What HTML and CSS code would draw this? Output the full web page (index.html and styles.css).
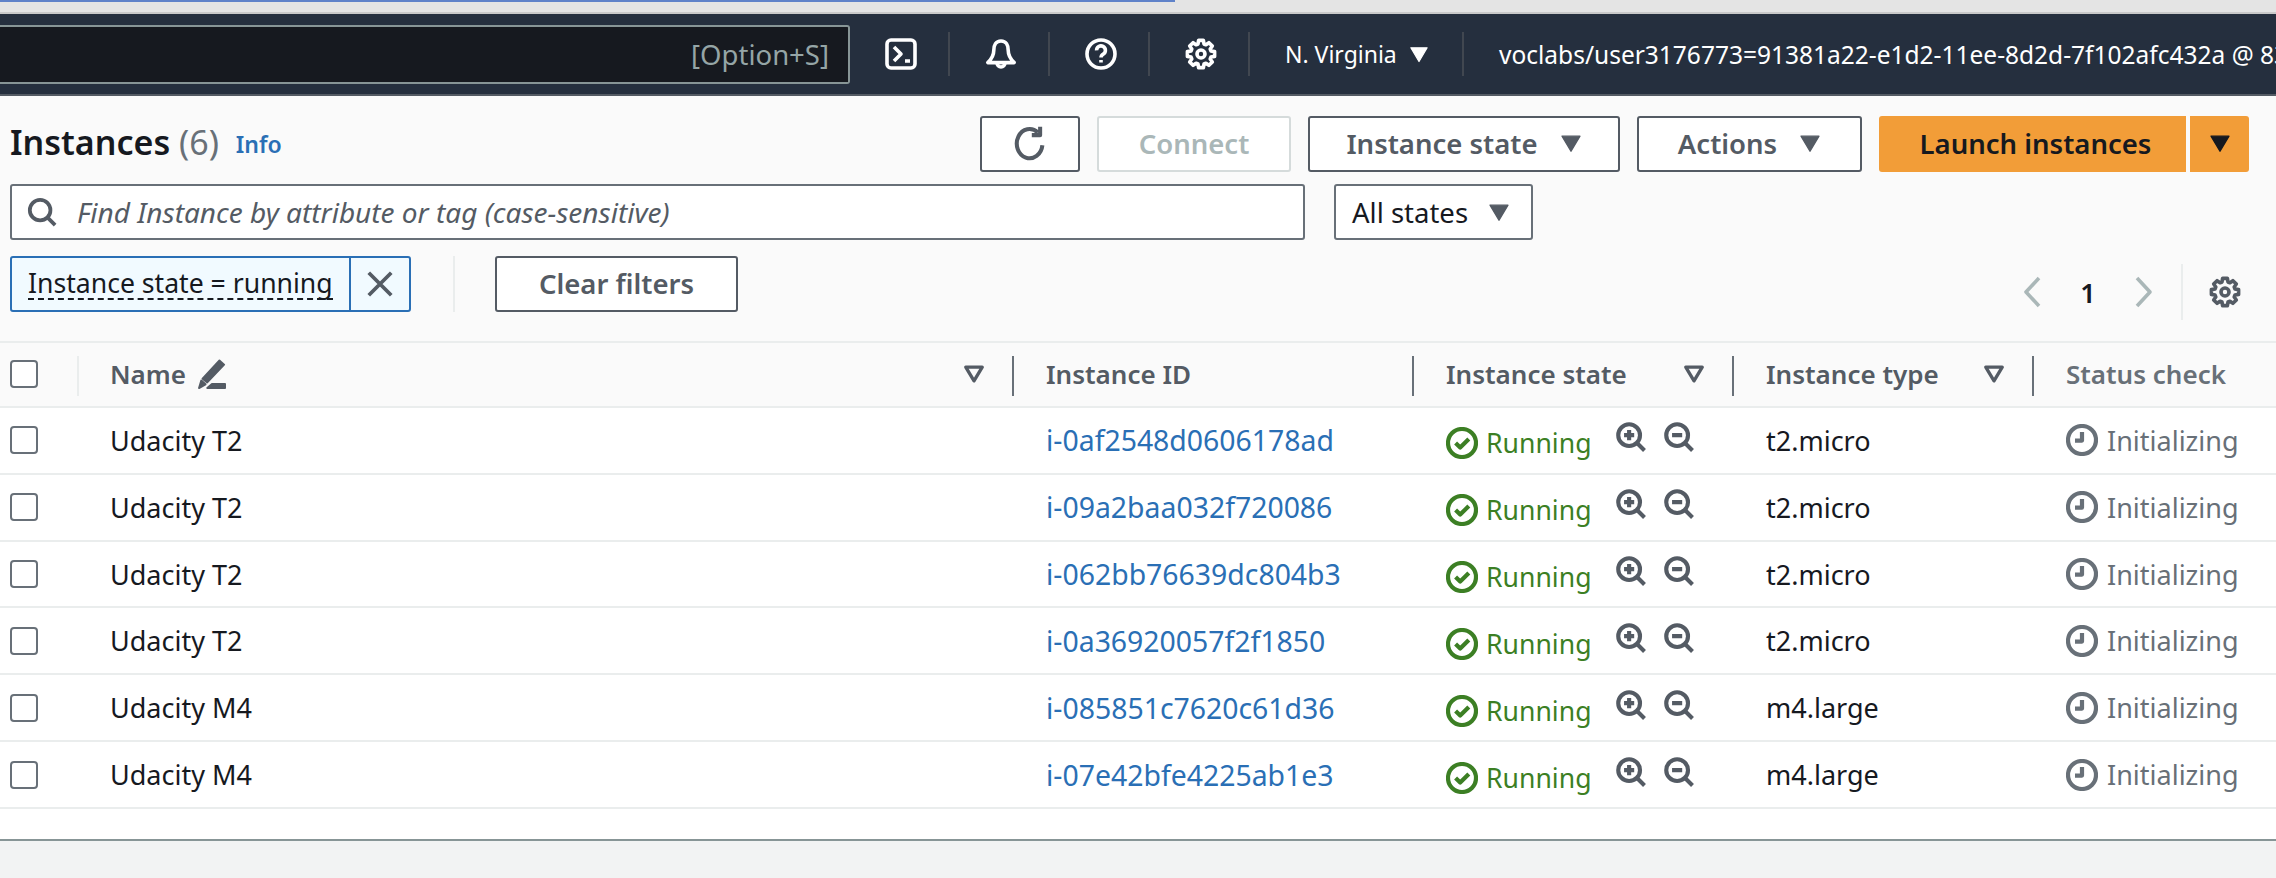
FILE: index.html
```html
<!DOCTYPE html>
<html lang="en">
<head>
<meta charset="UTF-8">
<title>Instances | EC2</title>
<link rel="stylesheet" href="styles.css">
</head>
<body>
<svg class="defs" width="0" height="0">
  <symbol id="i-console" viewBox="0 0 16 16"><rect x="1" y="1" width="14" height="14" rx="2"/><path d="M4.5 4.5 8 8l-3.5 3.5M10 11.5h2.5"/></symbol>
  <symbol id="i-bell" viewBox="0 0 16 16"><path d="M8 1.5c-2.6 0-3.6 2.2-3.6 4.6 0 2.800-1 4.300-3 6.200h13.200c-2-1.900-3-3.400-3-6.200 0-2.400-1-4.600-3.600-4.600zM6 12.500a2 2 0 1 0 4 0"/></symbol>
  <symbol id="i-help" viewBox="0 0 16 16"><circle cx="8" cy="8" r="7"/><path d="M5.800 6.200a2.200 2.200 0 1 1 3.400 1.800c-.8.500-1.200 1-1.200 1.800M8 11v1.300"/></symbol>
  <symbol id="i-gear" viewBox="0 0 16 16"><path d="M6.500 3 6.800 1.200H9.200L9.500 3 10.470 3.400 11.960 2.340 13.660 4.040 12.600 5.530 13 6.500 14.800 6.800V9.200L13 9.500 12.600 10.470 13.660 11.960 11.960 13.660 10.470 12.600 9.500 13 9.200 14.800H6.800L6.500 13 5.530 12.600 4.040 13.660 2.340 11.960 3.400 10.470 3 9.500 1.200 9.200V6.800L3 6.500 3.400 5.530 2.340 4.040 4.040 2.340 5.530 3.400Z"/><circle cx="8" cy="8" r="2"/></symbol>
  <symbol id="i-refresh" viewBox="0 0 16 16"><path d="M13.500 9a5.700 6.500 0 1 1-2-5.700M12.500 .8v3.700H8.800"/></symbol>
  <symbol id="i-search" viewBox="0 0 16 16"><circle cx="7" cy="7" r="5.500"/><path d="m11 11 4 4"/></symbol>
  <symbol id="i-caret" viewBox="0 0 16 16"><path class="solid" d="M1.500 3h13L8 14z"/></symbol>
  <symbol id="i-sort" viewBox="0 0 16 16"><path d="M2 3h12L8 13z"/></symbol>
  <symbol id="i-close" viewBox="0 0 16 16"><path d="m2 2 12 12M14 2 2 14"/></symbol>
  <symbol id="i-prev" viewBox="0 0 16 16"><path d="M11 1 4.500 8l6.500 7"/></symbol>
  <symbol id="i-next" viewBox="0 0 16 16"><path d="m5 1 6.500 7L5 15"/></symbol>
  <symbol id="i-pencil" viewBox="0 0 16 16"><path class="solid" d="M12.500 .8 15 3 6 12.500 3.500 10.500zM2.800 11.500l2.300 2-3.500 2zM8.500 13.300H15.500V15.500H6z"/></symbol>
  <symbol id="i-ok" viewBox="0 0 16 16"><circle cx="8" cy="8" r="7"/><path d="m4.800 8 2.300 2.300 4.300-4.300"/></symbol>
  <symbol id="i-clock" viewBox="0 0 16 16"><circle cx="8" cy="8" r="7"/><path d="M8 4v4.300H4.500"/></symbol>
  <symbol id="i-zoom-in" viewBox="0 0 16 16"><circle cx="7" cy="7" r="5.800"/><path d="M4.300 7h5.400M7 4.300v5.400M11.200 11.200 15.200 15.200"/></symbol>
  <symbol id="i-zoom-out" viewBox="0 0 16 16"><circle cx="7" cy="7" r="5.800"/><path d="M4.300 7h5.400M11.200 11.200 15.200 15.200"/></symbol>
</svg>

<div class="browser-strip"><div class="progress"></div></div>

<div class="topnav">
  <div class="nav-search">[Option+S]</div>
  <div class="nav-icon"><svg class="icon ic-32"><use href="#i-console"/></svg></div>
  <div class="nav-icon"><svg class="icon ic-32"><use href="#i-bell"/></svg></div>
  <div class="nav-icon"><svg class="icon ic-32"><use href="#i-help"/></svg></div>
  <div class="nav-icon"><svg class="icon ic-32"><use href="#i-gear"/></svg></div>
  <div class="nav-region">N. Virginia <svg class="icon ic-caret-small"><use href="#i-caret"/></svg></div>
  <div class="nav-user">voclabs/user3176773=91381a22-e1d2-11ee-8d2d-7f102afc432a @ 83</div>
</div>

<div class="page">
  <div class="head-row">
    <div class="title"><h1>Instances <span class="count">(6)</span></h1><a class="info">Info</a></div>
    <button class="btn btn-refresh"><svg class="icon ic-36"><use href="#i-refresh"/></svg></button>
    <button class="btn btn-connect" disabled>Connect</button>
    <button class="btn btn-state">Instance state <svg class="icon ic-caret"><use href="#i-caret"/></svg></button>
    <button class="btn btn-actions">Actions <svg class="icon ic-caret"><use href="#i-caret"/></svg></button>
    <div class="split">
      <button class="btn-primary btn-launch">Launch instances</button>
      <button class="btn-primary btn-drop"><svg class="icon ic-caret"><use href="#i-caret"/></svg></button>
    </div>
  </div>

  <div class="search-row">
    <div class="search"><svg class="icon ic-30"><use href="#i-search"/></svg><span>Find Instance by attribute or tag (case-sensitive)</span></div>
    <div class="select">All states <svg class="icon ic-caret"><use href="#i-caret"/></svg></div>
  </div>

  <div class="filter-row">
    <div class="token"><span class="token-label"><span>Instance state = running</span></span><span class="token-x"><svg class="icon ic-30"><use href="#i-close"/></svg></span></div>
    <div class="vr"></div>
    <button class="btn btn-clear">Clear filters</button>
    <div class="pager">
      <svg class="icon ic-32 muted"><use href="#i-prev"/></svg>
      <span class="page-num">1</span>
      <svg class="icon ic-32 muted"><use href="#i-next"/></svg>
      <div class="pager-gear"><svg class="icon ic-32"><use href="#i-gear"/></svg></div>
    </div>
  </div>

  <div class="table">
    <div class="row row-head">
      <div class="cell cell-check"><span class="check"></span></div>
      <div class="cell cell-name">Name <svg class="icon ic-pencil"><use href="#i-pencil"/></svg><svg class="icon ic-sort"><use href="#i-sort"/></svg></div>
      <div class="cell cell-id">Instance ID</div>
      <div class="cell cell-state">Instance state<svg class="icon ic-sort"><use href="#i-sort"/></svg></div>
      <div class="cell cell-type">Instance type<svg class="icon ic-sort"><use href="#i-sort"/></svg></div>
      <div class="cell cell-status">Status check</div>
    </div>

    <div class="row">
      <div class="cell cell-check"><span class="check"></span></div>
      <div class="cell cell-name">Udacity T2</div>
      <div class="cell cell-id"><a>i-0af2548d0606178ad</a></div>
      <div class="cell cell-state"><span class="running"><svg class="icon ic-32"><use href="#i-ok"/></svg>Running</span><svg class="icon ic-zoom"><use href="#i-zoom-in"/></svg><svg class="icon ic-zoom"><use href="#i-zoom-out"/></svg></div>
      <div class="cell cell-type">t2.micro</div>
      <div class="cell cell-status"><svg class="icon ic-32"><use href="#i-clock"/></svg>Initializing</div>
    </div>
    <div class="row">
      <div class="cell cell-check"><span class="check"></span></div>
      <div class="cell cell-name">Udacity T2</div>
      <div class="cell cell-id"><a>i-09a2baa032f720086</a></div>
      <div class="cell cell-state"><span class="running"><svg class="icon ic-32"><use href="#i-ok"/></svg>Running</span><svg class="icon ic-zoom"><use href="#i-zoom-in"/></svg><svg class="icon ic-zoom"><use href="#i-zoom-out"/></svg></div>
      <div class="cell cell-type">t2.micro</div>
      <div class="cell cell-status"><svg class="icon ic-32"><use href="#i-clock"/></svg>Initializing</div>
    </div>
    <div class="row">
      <div class="cell cell-check"><span class="check"></span></div>
      <div class="cell cell-name">Udacity T2</div>
      <div class="cell cell-id"><a>i-062bb76639dc804b3</a></div>
      <div class="cell cell-state"><span class="running"><svg class="icon ic-32"><use href="#i-ok"/></svg>Running</span><svg class="icon ic-zoom"><use href="#i-zoom-in"/></svg><svg class="icon ic-zoom"><use href="#i-zoom-out"/></svg></div>
      <div class="cell cell-type">t2.micro</div>
      <div class="cell cell-status"><svg class="icon ic-32"><use href="#i-clock"/></svg>Initializing</div>
    </div>
    <div class="row">
      <div class="cell cell-check"><span class="check"></span></div>
      <div class="cell cell-name">Udacity T2</div>
      <div class="cell cell-id"><a>i-0a36920057f2f1850</a></div>
      <div class="cell cell-state"><span class="running"><svg class="icon ic-32"><use href="#i-ok"/></svg>Running</span><svg class="icon ic-zoom"><use href="#i-zoom-in"/></svg><svg class="icon ic-zoom"><use href="#i-zoom-out"/></svg></div>
      <div class="cell cell-type">t2.micro</div>
      <div class="cell cell-status"><svg class="icon ic-32"><use href="#i-clock"/></svg>Initializing</div>
    </div>
    <div class="row">
      <div class="cell cell-check"><span class="check"></span></div>
      <div class="cell cell-name">Udacity M4</div>
      <div class="cell cell-id"><a>i-085851c7620c61d36</a></div>
      <div class="cell cell-state"><span class="running"><svg class="icon ic-32"><use href="#i-ok"/></svg>Running</span><svg class="icon ic-zoom"><use href="#i-zoom-in"/></svg><svg class="icon ic-zoom"><use href="#i-zoom-out"/></svg></div>
      <div class="cell cell-type">m4.large</div>
      <div class="cell cell-status"><svg class="icon ic-32"><use href="#i-clock"/></svg>Initializing</div>
    </div>
    <div class="row">
      <div class="cell cell-check"><span class="check"></span></div>
      <div class="cell cell-name">Udacity M4</div>
      <div class="cell cell-id"><a>i-07e42bfe4225ab1e3</a></div>
      <div class="cell cell-state"><span class="running"><svg class="icon ic-32"><use href="#i-ok"/></svg>Running</span><svg class="icon ic-zoom"><use href="#i-zoom-in"/></svg><svg class="icon ic-zoom"><use href="#i-zoom-out"/></svg></div>
      <div class="cell cell-type">m4.large</div>
      <div class="cell cell-status"><svg class="icon ic-32"><use href="#i-clock"/></svg>Initializing</div>
    </div>
  </div>
</div>

<div class="footer"></div>
</body>
</html>
```

FILE: styles.css
```css
/* Page */
html, body {
  height: 100%;
}

body {
  margin: 0;
  display: flex;
  flex-direction: column;
  overflow: hidden;
  background-color: #fafafa;
  color: #16191f;
  font-family: "Noto Sans", sans-serif;
  font-size: 27px;
}

button {
  font-family: inherit;
}

.defs {
  position: absolute;
}

/* Icons */
.icon {
  flex: none;
  fill: none;
  stroke: currentColor;
  stroke-width: 1.8;
  stroke-linejoin: round;
}

.solid {
  fill: currentColor;
  stroke: currentColor;
  stroke-width: 1;
}

.ic-36 { width: 36px; height: 36px; }
.ic-32 { width: 32px; height: 32px; }
.ic-30 { width: 30px; height: 30px; stroke-width: 2; }
.ic-caret { width: 22px; height: 22px; }
.ic-caret-small { width: 20px; height: 20px; }
.ic-sort { width: 22px; height: 22px; stroke-width: 2.4; }
.ic-zoom { width: 30px; height: 30px; stroke-width: 2.2; }
.ic-pencil { width: 30px; height: 30px; }
.muted { color: #aab7b8; }

/* Browser strip above the console */
.browser-strip {
  height: 12px;
  flex: none;
  background-color: #e4e4e4;
  border-bottom: 2px solid #c9c9c9;
}

.progress {
  width: 1175px;
  height: 2px;
  background-color: #5f82c9;
}

/* Top navigation */
.topnav {
  height: 80px;
  flex: none;
  display: flex;
  align-items: center;
  background-color: #252f3e;
  border-bottom: 2px solid #545b64;
  color: #fff;
  font-size: 23px;
  white-space: nowrap;
}

.nav-search {
  width: 850px;
  height: 59px;
  flex: none;
  box-sizing: border-box;
  display: flex;
  align-items: center;
  justify-content: flex-end;
  padding-right: 19px;
  background-color: #16191f;
  border: 2px solid #879596;
  border-left: none;
  border-radius: 0 3px 3px 0;
  color: #95a5a6;
  font-size: 27.5px;
}

.nav-icon {
  width: 100px;
  height: 44px;
  flex: none;
  display: flex;
  align-items: center;
  justify-content: center;
  box-sizing: border-box;
  padding-left: 4px;
  border-right: 2px solid #414750;
}

.nav-region {
  width: 214px;
  height: 44px;
  flex: none;
  box-sizing: border-box;
  display: flex;
  align-items: center;
  gap: 12px;
  padding-left: 35px;
  border-right: 2px solid #414750;
}

.nav-user {
  padding-left: 35px;
  font-size: 24.5px;
}

/* Heading, search and filter rows */
.page {
  flex: none;
  padding-top: 20px;
  background-color: #fafafa;
}

.head-row {
  display: flex;
  align-items: stretch;
  height: 56px;
  gap: 17px;
  padding: 0 27px 0 10px;
}

.title {
  flex: 1;
  display: flex;
  align-items: center;
  gap: 17px;
}

h1 {
  margin: 0 0 4px;
  font-size: 34px;
  font-weight: 600;
}

.count {
  color: #687078;
  font-weight: 400;
}

.info {
  color: #2a6fb5;
  font-size: 23px;
  font-weight: 600;
}

.btn {
  display: flex;
  align-items: center;
  justify-content: center;
  box-sizing: border-box;
  height: 56px;
  padding: 0 0 2px;
  background-color: #fff;
  border: 2px solid #545b64;
  border-radius: 3px;
  color: #545b64;
  font-size: 27.5px;
  font-weight: 600;
}

.btn-refresh { width: 100px; }
.btn-connect { width: 194px; border-color: #d5dbdb; color: #aab7b8; }
.btn-state { width: 312px; gap: 22px; }
.btn-actions { width: 225px; gap: 22px; }
.btn-clear { width: 243px; }

.split {
  display: flex;
  gap: 4px;
}

.btn-primary {
  display: flex;
  align-items: center;
  justify-content: center;
  padding: 0 0 2px;
  background-color: #f29d38;
  border: none;
  border-radius: 3px;
  color: #16191f;
  font-size: 27.5px;
  font-weight: 600;
}

.btn-launch { width: 307px; padding-left: 6px; border-radius: 3px 0 0 3px; }
.btn-drop { width: 59px; border-radius: 0 3px 3px 0; }

.search-row {
  display: flex;
  margin-top: 12px;
  padding-left: 10px;
  gap: 29px;
}

.search {
  width: 1295px;
  height: 56px;
  box-sizing: border-box;
  display: flex;
  align-items: center;
  gap: 20px;
  padding-left: 15px;
  background-color: #fff;
  border: 2px solid #687078;
  border-radius: 3px;
  color: #545b64;
  font-size: 28px;
  font-style: italic;
}

.select {
  width: 199px;
  height: 56px;
  box-sizing: border-box;
  display: flex;
  align-items: center;
  gap: 20px;
  padding-left: 16px;
  background-color: #fff;
  border: 2px solid #687078;
  border-radius: 3px;
  font-size: 27.5px;
}

.select .icon { color: #545b64; }

.filter-row {
  display: flex;
  align-items: flex-start;
  height: 64px;
  margin-top: 16px;
  padding: 0 27px 0 10px;
}

.token {
  width: 401px;
  height: 56px;
  box-sizing: border-box;
  display: flex;
  background-color: #f1faff;
  border: 2px solid #2a6fb5;
  border-radius: 3px;
  font-size: 26.6px;
}

.token-label {
  flex: 1;
  display: flex;
  align-items: center;
  padding-left: 16px;
  border-right: 2px solid #2a6fb5;
}

.token-label span {
  border-bottom: 2px dashed #16191f;
  line-height: 30px;
}

.token-x {
  width: 58px;
  display: flex;
  align-items: center;
  justify-content: center;
  color: #545b64;
}

.vr {
  width: 2px;
  height: 56px;
  margin: 0 40px 0 42px;
  background-color: #eaeded;
}

.pager {
  margin-left: auto;
  display: flex;
  align-items: center;
  height: 56px;
  margin-top: 8px;
  margin-right: -4px;
}

.page-num {
  width: 78px;
  text-align: center;
  font-weight: 600;
}

.pager-gear {
  display: flex;
  align-items: center;
  height: 56px;
  margin-left: 22px;
  padding: 0 12px 0 26px;
  border-left: 2px solid #eaeded;
  color: #545b64;
}

/* Instances table */
.table {
  height: 496px;
  margin-top: 21px;
  background-color: #fff;
  border-top: 2px solid #eaeded;
  border-bottom: 2px solid #879596;
}

.row {
  display: grid;
  grid-template-columns: 78px 935px 400px 320px 300px 1fr;
  height: 66.83px;
  box-sizing: border-box;
  border-bottom: 2px solid #eaeded;
}

.row-head {
  height: 65px;
  padding-bottom: 2px;
  background-color: #fafafa;
  color: #545b64;
  font-size: 26px;
  font-weight: 600;
}

.cell {
  display: flex;
  align-items: center;
  padding-left: 33px;
  white-space: nowrap;
}

.cell-name {
  padding-left: 32px;
}

.row-head .cell {
  position: relative;
  padding-right: 28px;
}

.row-head .cell::before {
  content: "";
  position: absolute;
  left: -1px;
  top: 13px;
  height: 40px;
  width: 2px;
  background-color: #687078;
}

.row-head .cell-check::before {
  display: none;
}

.row-head .cell-name::before {
  background-color: #eaeded;
}

.row-head .cell-name .ic-pencil {
  margin-left: 10px;
}

.row-head .ic-sort {
  margin-left: auto;
}

.cell-check {
  padding-left: 10px;
}

.check {
  width: 28px;
  height: 28px;
  box-sizing: border-box;
  background-color: #fff;
  border: 2px solid #687078;
  border-radius: 4px;
}

.cell-id a {
  color: #2a6fb5;
  font-size: 28.4px;
}

.running {
  display: flex;
  align-items: center;
  gap: 8px;
  margin-top: 6px;
  color: #3c7f24;
  font-size: 26.6px;
}

.running .icon {
  stroke-width: 2.1;
}

.cell-state .ic-zoom {
  margin-top: -6px;
  color: #545b64;
  margin-left: 24px;
}

.cell-state .ic-zoom + .ic-zoom {
  margin-left: 18px;
}

.cell-status {
  gap: 9px;
  color: #687078;
}

.cell-status .icon {
  stroke-width: 2.1;
}

.footer {
  flex: 1;
  background-color: #f2f3f3;
}
```
